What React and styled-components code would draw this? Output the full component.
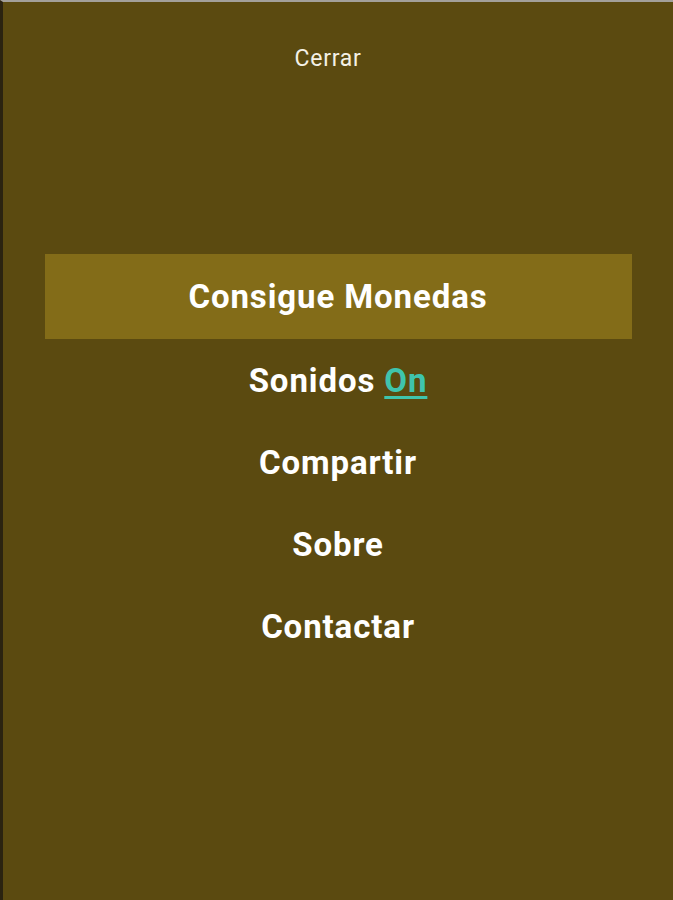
import React from "react";
import styled, { createGlobalStyle } from "styled-components";

const Global = createGlobalStyle`
  html, body { margin: 0; padding: 0; background: #5a4a10; }
  body { font-family: Roboto, "Noto Sans", sans-serif; }
`;

const Screen = styled.div`
  box-sizing: border-box;
  width: 673px;
  height: 900px;
  background: #5b4a10;
  border-top: 2px solid #a3a09a;
  border-left: 3px solid #2b2310;
  display: flex;
  flex-direction: column;
  align-items: center;
`;

const CloseButton = styled.div`
  margin-top: 44px;
  margin-right: 20px;
  color: #f4f1e6;
  font-size: 23px;
  font-weight: 400;
  line-height: 26px;
  letter-spacing: 0.7px;
`;

const Menu = styled.nav`
  margin-top: 182px;
  width: 587px;
  display: flex;
  flex-direction: column;
`;

const Item = styled.div`
  height: ${(p) => (p.$active ? 85 : 82)}px;
  display: flex;
  align-items: center;
  justify-content: center;
  background: ${(p) => (p.$active ? "#836c18" : "transparent")};
  color: #ffffff;
  font-size: 33px;
  font-weight: 700;
  letter-spacing: 0.9px;
`;

const Toggle = styled.span`
  color: #3fc4ad;
  text-decoration: underline;
  text-decoration-thickness: 3px;
  text-underline-offset: 4px;
  margin-left: 9px;
`;

export default function App() {
  return (
    <>
      <Global />
      <Screen>
        <CloseButton>Cerrar</CloseButton>
        <Menu>
          <Item $active>Consigue Monedas</Item>
          <Item>
            Sonidos<Toggle>On</Toggle>
          </Item>
          <Item>Compartir</Item>
          <Item>Sobre</Item>
          <Item>Contactar</Item>
        </Menu>
      </Screen>
    </>
  );
}
